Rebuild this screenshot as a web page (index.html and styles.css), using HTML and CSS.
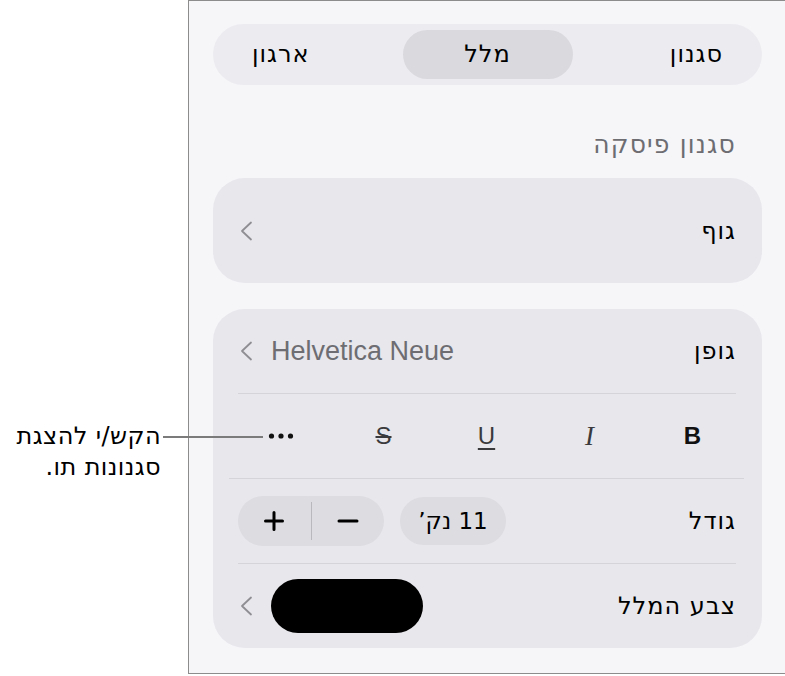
FILE: index.html
```html
<!DOCTYPE html>
<html lang="he">
<head>
<meta charset="utf-8">
<title>מלל</title>
<link rel="stylesheet" href="styles.css">
</head>
<body>
<div class="stage">
  <div class="callout">
    <p class="callout-text">הקש/י להצגת<br>סגנונות תו.</p>
    <span class="callout-line"></span>
  </div>
  <div class="panel" dir="rtl">
    <div class="segmented">
      <div class="seg seg-side seg-start">סגנון</div>
      <div class="seg seg-selected">מלל</div>
      <div class="seg seg-side seg-end">ארגון</div>
    </div>
    <div class="section-title">סגנון פיסקה</div>
    <div class="card card-single">
      <div class="row row-simple">
        <span class="label">גוף</span>
        <svg class="chev" width="14" height="22" viewBox="0 0 14 22"><path d="M12 2.5 L3 11 L12 19.5" /></svg>
      </div>
    </div>
    <div class="card card-multi">
      <div class="row">
        <span class="label">גופן</span>
        <span class="value">
          <span class="value-text" dir="ltr">Helvetica Neue</span>
          <svg class="chev" width="14" height="22" viewBox="0 0 14 22"><path d="M12 2.5 L3 11 L12 19.5" /></svg>
        </span>
      </div>
      <div class="row row-styles">
        <span class="style-btn style-b">B</span>
        <span class="style-btn style-i">I</span>
        <span class="style-btn style-u">U</span>
        <span class="style-btn style-s">S</span>
        <span class="style-btn style-more">
          <svg width="26" height="8" viewBox="0 0 26 8"><circle cx="3.5" cy="4" r="2.6"/><circle cx="13" cy="4" r="2.6"/><circle cx="22.5" cy="4" r="2.6"/></svg>
        </span>
      </div>
      <div class="row">
        <span class="label">גודל</span>
        <span class="size-controls">
          <span class="size-pill">11 נק’</span>
          <span class="stepper">
            <span class="step">
              <svg width="22" height="22" viewBox="0 0 22 22"><path d="M2 11 H20" /></svg>
            </span>
            <span class="step-div"></span>
            <span class="step">
              <svg width="22" height="22" viewBox="0 0 22 22"><path d="M2.5 11 H19.5 M11 2.5 V19.5" /></svg>
            </span>
          </span>
        </span>
      </div>
      <div class="row row-last">
        <span class="label">צבע המלל</span>
        <span class="value">
          <span class="swatch"></span>
          <svg class="chev" width="14" height="22" viewBox="0 0 14 22"><path d="M12 2.5 L3 11 L12 19.5" /></svg>
        </span>
      </div>
    </div>
  </div>
</div>
</body>
</html>
```

FILE: styles.css
```css
html, body {
  margin: 0;
  padding: 0;
  background: #ffffff;
  overflow: hidden;
}

body {
  font-family: "DejaVu Sans", "Liberation Sans", sans-serif;
  color: #000;
}

.stage {
  position: relative;
  width: 785px;
  height: 676px;
}

.callout {
  position: absolute;
  left: 0;
  top: 0;
  width: 0;
  height: 0;
}

.callout-text {
  position: absolute;
  left: 0;
  top: 421px;
  width: 161px;
  margin: 0;
  direction: rtl;
  text-align: right;
  font-size: 24px;
  letter-spacing: 0.4px;
  line-height: 31px;
  color: #000;
  z-index: 2;
}

.callout-line {
  position: absolute;
  left: 163px;
  top: 436px;
  width: 100px;
  height: 2px;
  background: #7b7b7b;
  z-index: 2;
}

.panel {
  box-sizing: border-box;
  margin-left: 188px;
  width: 599px;
  height: 674px;
  border: 1px solid #8c8c8c;
  background: #f6f6f9;
  padding: 23px 24px 24px 24px;
  display: flex;
  flex-direction: column;
}

.segmented {
  height: 61px;
  border-radius: 31px;
  background: #ececf0;
  display: grid;
  grid-template-columns: 1fr 170px 1fr;
  align-items: center;
  font-size: 24px;
  letter-spacing: 1px;
}

.seg {
  line-height: 49px;
  white-space: nowrap;
}

.seg-start {
  justify-self: start;
  margin-inline-start: 39px;
}

.seg-end {
  justify-self: end;
  margin-inline-end: 39px;
}

.seg-selected {
  height: 49px;
  border-radius: 25px;
  background: #d9d9de;
  text-align: center;
}

.section-title {
  margin: 45px 26px 18px 0;
  font-size: 25px;
  letter-spacing: 1.2px;
  line-height: 30px;
  color: #6d6d72;
}

.card {
  background: #e7e7ec;
  border-radius: 32px;
  padding: 0 26px 0 25px;
}

.card-single {
  height: 105px;
  display: flex;
  align-items: center;
}

.card-multi {
  margin-top: 26px;
}

.row {
  height: 84px;
  display: flex;
  align-items: center;
  justify-content: space-between;
  border-bottom: 1px solid #d4d4d9;
  font-size: 24px;
}

.row-simple {
  width: 100%;
  border-bottom: none;
  height: 105px;
}

.row-last {
  border-bottom: none;
}

.label {
  color: #000;
  white-space: nowrap;
  letter-spacing: 1px;
}

.chev {
  display: block;
  margin-inline-end: 1px;
}

.chev path {
  fill: none;
  stroke: #8e8e93;
  stroke-width: 1.8;
  stroke-linecap: round;
  stroke-linejoin: round;
}

.value {
  display: flex;
  align-items: center;
  gap: 18px;
}

.value-text {
  font-family: "Liberation Sans", "DejaVu Sans", sans-serif;
  font-size: 27px;
  color: #6d6d72;
}

.row-styles {
  margin: 0 -8px 0 -9px;
  display: grid;
  grid-template-columns: repeat(5, 1fr);
  justify-items: center;
}

.style-btn {
  font-family: "Liberation Sans", "DejaVu Sans", sans-serif;
  font-size: 24px;
  line-height: 30px;
  color: #3a3a3c;
}

.style-b {
  font-weight: bold;
  color: #111;
  font-size: 24px;
}

.style-i {
  font-family: "Liberation Serif", "DejaVu Serif", serif;
  font-style: italic;
  font-size: 27px;
}

.style-u {
  text-decoration: underline;
  text-decoration-thickness: 2px;
  text-underline-offset: 4px;
}

.style-s {
  text-decoration: line-through;
  text-decoration-thickness: 2px;
}

.style-more {
  display: flex;
  align-items: center;
}

.style-more svg {
  display: block;
  fill: #111;
}

.size-controls {
  display: flex;
  align-items: center;
  gap: 16px;
}

.size-pill {
  width: 106px;
  height: 48px;
  border-radius: 24px;
  background: #dcdce1;
  display: flex;
  align-items: center;
  justify-content: center;
  font-size: 23px;
  color: #000;
}

.stepper {
  width: 146px;
  height: 50px;
  border-radius: 25px;
  background: #dcdce1;
  display: flex;
  align-items: center;
}

.step {
  flex: 1;
  display: flex;
  align-items: center;
  justify-content: center;
}

.step svg {
  display: block;
}

.step svg path {
  fill: none;
  stroke: #000;
  stroke-width: 3;
  stroke-linecap: round;
}

.step-div {
  width: 1px;
  height: 38px;
  background: #b8b8bd;
}

.swatch {
  width: 152px;
  height: 54px;
  border-radius: 27px;
  background: #000;
}
```
